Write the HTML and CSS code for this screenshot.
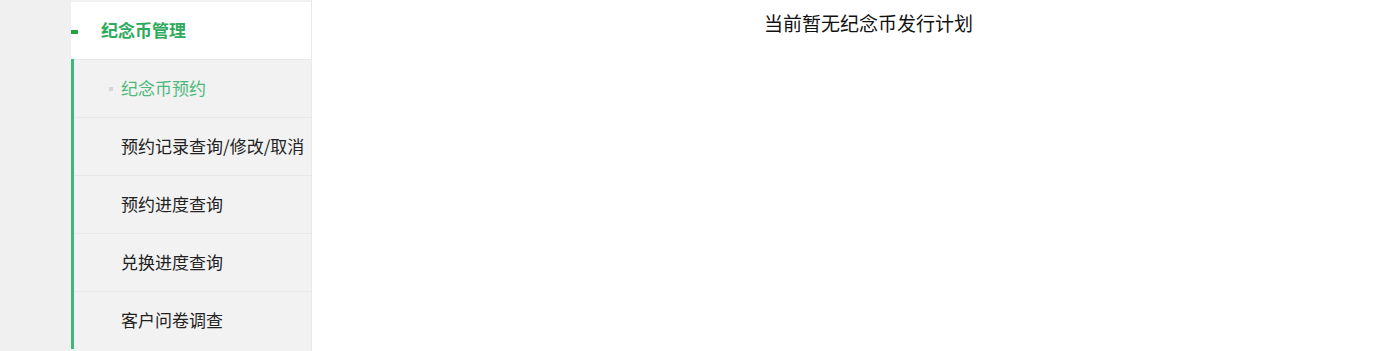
FILE: index.html
```html
<!DOCTYPE html>
<html lang="zh-CN">
<head>
    <meta charset="UTF-8">
    <meta name="viewport" content="width=device-width, initial-scale=1.0">
    <title>纪念币管理</title>
    <link rel="stylesheet" href="styles.css">
</head>
<body>
    <div class="page">
        <div class="gutter"></div>
        <div class="sidebar">
            <div class="menu-title">纪念币管理</div>
            <ul class="submenu">
                <li class="active">纪念币预约</li>
                <li>预约记录查询/修改/取消</li>
                <li>预约进度查询</li>
                <li>兑换进度查询</li>
                <li>客户问卷调查</li>
            </ul>
        </div>
        <div class="content">
            <p class="notice">当前暂无纪念币发行计划</p>
        </div>
    </div>
</body>
</html>
```

FILE: styles.css
```css
body {
    margin: 0;
    font-family: "Microsoft YaHei", "Noto Sans CJK SC", sans-serif;
    background: #fff;
}

.page {
    display: flex;
    height: 351px;
    overflow: hidden;
}

.gutter {
    width: 71px;
    background-color: #f0f0f0;
}

.sidebar {
    width: 240px;
    border-right: 1px solid #e9e9e9;
    background-color: #f2f2f2;
}

.menu-title {
    position: relative;
    height: 57px;
    line-height: 56px;
    margin-top: 1px;
    border-top: 1px solid #f0f0f0;
    background: #fff;
    padding-left: 30px;
    font-size: 17px;
    font-weight: bold;
    color: #2eaa5c;
}

.menu-title::before {
    content: "";
    position: absolute;
    left: 0;
    top: 28px;
    width: 7px;
    height: 4px;
    background-color: #22a345;
}

.submenu {
    list-style: none;
    margin: 0;
    padding: 0;
    border-left: 3px solid #3cb878;
}

.submenu li {
    height: 57px;
    line-height: 56px;
    padding-left: 47px;
    border-top: 1px solid #e8e8e8;
    font-size: 17px;
    color: #222;
    white-space: nowrap;
}

.submenu li.active {
    position: relative;
    color: #4cb97a;
}

.submenu li.active::before {
    content: "";
    position: absolute;
    left: 35px;
    top: 27px;
    width: 4px;
    height: 4px;
    background-color: #d6d6d6;
}

.content {
    flex: 1;
    text-align: center;
}

.notice {
    margin: 9px 0 0;
    padding-left: 36px;
    font-size: 19px;
    color: #111;
}
```
